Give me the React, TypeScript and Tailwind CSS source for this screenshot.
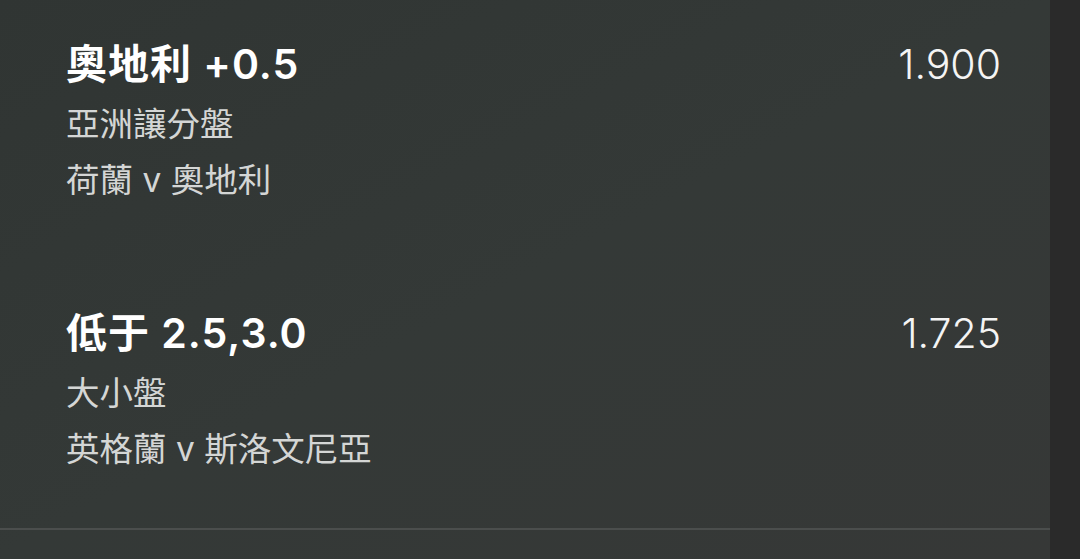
const bets = [
  { title: '奧地利 +0.5', market: '亞洲讓分盤', match: '荷蘭 v 奧地利', odds: '1.900' },
  { title: '低于 2.5,3.0', market: '大小盤', match: '英格蘭 v 斯洛文尼亞', odds: '1.725' },
];

const App = () => {
  return (
    <div
      className="flex h-[559px] w-[1080px] overflow-hidden bg-[#2a2a2a]"
      style={{ fontFamily: 'Inter, "Noto Sans CJK TC", sans-serif' }}
    >
      <div className="h-full w-[1050px] bg-gradient-to-br from-[#303533] via-[#343937] to-[#363837]">
        <div className="pl-[66px] pr-[49px] pt-[40px]">
          {bets.map((bet, index) => (
            <div key={index} className={index > 0 ? 'mt-[109px] flex justify-between' : 'flex justify-between'}>
              <div>
                <div className="text-[41px] font-semibold leading-[48px] tracking-[1px] text-white">{bet.title}</div>
                <div className="text-[33.5px] leading-[72px] text-[#d4d6d5]">{bet.market}</div>
                <div className="text-[33.5px] leading-[40px] text-[#d4d6d5]">{bet.match}</div>
              </div>
              <div className="text-[41px] font-light leading-[48px] text-[#f4f4f4]">{bet.odds}</div>
            </div>
          ))}
        </div>
        <div className="mt-[59px] h-[2px] bg-[#4b4e4d]" />
      </div>
    </div>
  );
};

export default App;
